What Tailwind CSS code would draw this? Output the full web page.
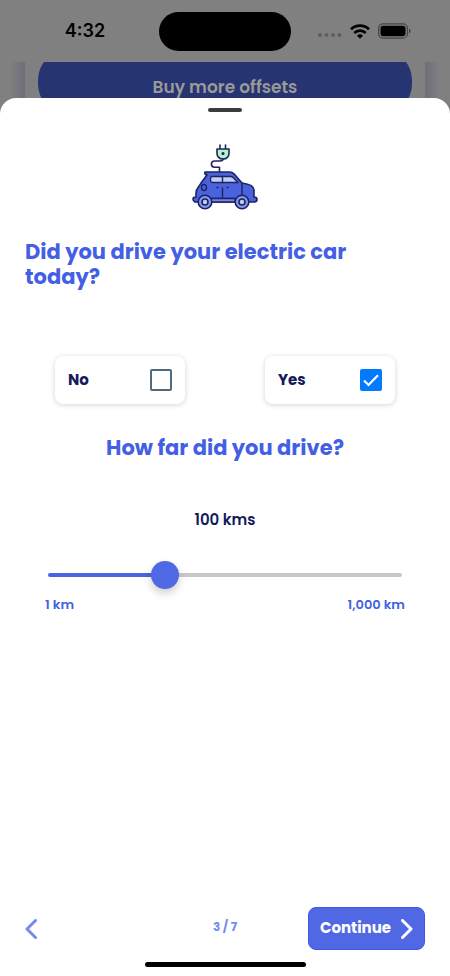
<!DOCTYPE html>
<html lang="en">
<head>
<meta charset="utf-8">
<meta name="viewport" content="width=device-width, initial-scale=1">
<title>Electric car check-in</title>
<script src="https://cdn.jsdelivr.net/npm/@tailwindcss/browser@4"></script>
</head>
<body class="flex min-h-screen flex-col bg-[#808080] font-['Poppins','Inter',sans-serif]">
  <header class="grid h-[62px] shrink-0 grid-cols-3 items-center">
    <div class="pl-5 text-center font-['Inter',sans-serif] text-lg font-semibold text-black">4:32</div>
    <div class="mx-auto h-[39px] w-[132px] rounded-full bg-black"></div>
    <div class="flex items-center justify-end gap-2 pr-[39px]">
      <svg class="mt-2 h-1 w-6" viewBox="0 0 24 4" fill="#5f5f5f" aria-hidden="true"><circle cx="2" cy="2" r="2"/><circle cx="8.500" cy="2" r="2"/><circle cx="15" cy="2" r="2"/><circle cx="21.500" cy="2" r="2"/></svg>
      <svg class="h-[15px] w-5" viewBox="0 0 20 15" fill="none" stroke="#000" stroke-width="2.800" aria-hidden="true"><path d="M1 5.200a12.900 12.900 0 0 1 18 0"/><path d="M4.300 8.900a8.200 8.200 0 0 1 11.400 0"/><path d="M10 14.800 7 11.700a4.300 4.300 0 0 1 6 0Z" fill="#000" stroke="none"/></svg>
      <svg class="h-4 w-[33px]" viewBox="0 0 33 16" aria-hidden="true"><rect x=".6" y=".8" width="28.800" height="14.400" rx="4.500" fill="none" stroke="#444" stroke-width="1.200"/><rect x="2.500" y="2.700" width="25" height="10.600" rx="2.800"/><path d="M31 5.500c2 .8 2 4.200 0 5Z" fill="#444"/></svg>
    </div>
  </header>

  <div class="flex h-9 shrink-0 overflow-hidden">
    <div class="w-[25px] bg-linear-to-r from-[#808080] from-40% to-[#6d6e7a]"></div>
    <div class="flex-1 overflow-hidden px-[13px]">
      <button type="button" class="-mt-3 h-16 w-full rounded-[30px] bg-[#273472] pt-3 text-[17px] font-semibold text-[#999]">Buy more offsets</button>
    </div>
    <div class="w-[25px] bg-linear-to-l from-[#808080] from-40% to-[#6d6e7a]"></div>
  </div>

  <main class="flex flex-1 flex-col rounded-t-2xl bg-white">
    <div class="mx-auto mt-[10px] h-1 w-[34px] rounded-full bg-[#3a3c3e]"></div>

    <svg class="mx-auto mt-8 h-[66px] w-[66px]" viewBox="0 0 66 66" fill="none" stroke="#1c2561" stroke-width="1.600" stroke-linecap="round" stroke-linejoin="round" role="img" aria-label="Electric car">
      <path d="M28 1v4M33.500 1v4"/>
      <path d="M25 5h12v4.500a5.500 5.500 0 0 1-5.500 5.500h-1a5.500 5.500 0 0 1-5.500-5.500Z" fill="#b5f2c4"/>
      <circle cx="31" cy="9.500" r=".8" fill="#1c2561"/>
      <path d="M31 15c0 1.800-1 2-3 2h-5.500a3 3 0 0 0 0 6.200h5v4.800"/>
      <path d="M13 28h25q2 0 4 1.800L50 39c7 1 12 3 12 7v7q3 0 3 2.500T62 58H3q-2-1-2-3t3-2v-4c0-5 3-6 5-10l6-8q-3-1-2-3Z" fill="#4a62dc"/>
      <path d="M19 32.500h19.500q1.500 0 2.500 1l5 5H21q-2.500 0-2.500-2.500Z" fill="#c0cdf8" stroke-width="1.300"/>
      <path d="M30.500 32.500v6M50 39v13M30.500 44v10M25 43.500h1M35 43.500h1M19 54.500h24" stroke-width="1.400"/>
      <ellipse cx="12" cy="43.500" rx="2.500" ry="3" stroke-width="1.400"/>
      <path d="M19 54.500h24V58H19Z" fill="#7187ed" stroke-width="1.400"/>
      <circle cx="13" cy="58" r="6.800" fill="#8498f0"/><circle cx="13" cy="58" r="3" fill="#c0cdf8"/>
      <circle cx="50" cy="58" r="6.800" fill="#8498f0"/><circle cx="50" cy="58" r="3" fill="#c0cdf8"/>
    </svg>

    <h1 class="mt-[29px] px-[25px] text-[21px] leading-[25px] font-bold text-[#445fe3]">Did you drive your electric car today?</h1>

    <div class="mt-[67px] flex justify-between px-[55px]">
      <label class="flex h-12 w-[130px] items-center justify-between rounded-lg bg-white px-[13px] text-[15px] font-bold text-[#141b5c] shadow-[0_1px_5px_rgba(30,35,90,0.2)]">
        No
        <input type="checkbox" class="h-[22px] w-[22px] appearance-none rounded-xs border-2 border-[#526a7d]">
      </label>
      <label class="flex h-12 w-[130px] items-center justify-between rounded-lg bg-white px-[13px] text-[15px] font-bold text-[#141b5c] shadow-[0_1px_5px_rgba(30,35,90,0.2)]">
        Yes
        <span class="grid">
          <input type="checkbox" checked class="col-start-1 row-start-1 h-[22px] w-[22px] appearance-none rounded-xs border-2 border-[#526a7d] checked:border-[#007aff] checked:bg-[#007aff]">
          <svg class="pointer-events-none col-start-1 row-start-1 h-[22px] w-[22px]" viewBox="0 0 22 22" fill="none" stroke="#fff" stroke-width="2.200" aria-hidden="true"><path d="m4 11.500 4.500 4.500L18 6.300"/></svg>
        </span>
      </label>
    </div>

    <h2 class="mt-7 text-center text-[21px] leading-8 font-bold text-[#445fe3]"><label for="distance">How far did you drive?</label></h2>
    <output for="distance" class="mt-11 text-center text-[15px] leading-6 font-semibold text-[#141b5c]">100 kms</output>

    <div class="mt-[29px] px-12">
      <input id="distance" type="range" min="0" max="1000" value="316" aria-valuetext="100 kms" class="block h-7 w-full appearance-none bg-transparent [&::-webkit-slider-runnable-track]:h-1 [&::-webkit-slider-runnable-track]:rounded-full [&::-webkit-slider-runnable-track]:bg-linear-to-r [&::-webkit-slider-runnable-track]:from-[#4a63e0] [&::-webkit-slider-runnable-track]:from-33% [&::-webkit-slider-runnable-track]:to-[#c8c8c8] [&::-webkit-slider-runnable-track]:to-33% [&::-webkit-slider-thumb]:-mt-3 [&::-webkit-slider-thumb]:h-7 [&::-webkit-slider-thumb]:w-7 [&::-webkit-slider-thumb]:appearance-none [&::-webkit-slider-thumb]:rounded-full [&::-webkit-slider-thumb]:bg-[#5068e4] [&::-webkit-slider-thumb]:shadow-[0_4px_8px_rgba(0,0,0,0.2)]">
    </div>
    <div class="mt-1 flex justify-between px-[45px] text-[13px] leading-6 font-semibold text-[#445fe3]">
      <span>1 km</span>
      <span>1,000 km</span>
    </div>

    <footer class="mt-auto">
      <div class="grid grid-cols-3 items-center px-[25px]">
        <button type="button" aria-label="Back" class="justify-self-start">
          <svg class="h-5 w-3" viewBox="0 0 12 20" fill="none" stroke="#768bee" stroke-width="3" stroke-linecap="round" stroke-linejoin="round" aria-hidden="true"><path d="M10.500 1.500 2 10l8.500 8.500"/></svg>
        </button>
        <span class="pb-1 text-center text-xs font-bold text-[#768bee]">3 / 7</span>
        <button type="button" class="flex h-[43px] w-[117px] items-center justify-between justify-self-end rounded-lg border border-[#3f58e0] bg-[#5068e4] px-[11px] text-[15px] font-bold text-white">
          Continue
          <svg class="h-5 w-3" viewBox="0 0 12 20" fill="none" stroke="#fff" stroke-width="3" stroke-linecap="round" stroke-linejoin="round" aria-hidden="true"><path d="M1.500 1.500 10 10l-8.500 8.500"/></svg>
        </button>
      </div>
      <div class="mx-auto mt-3 mb-[9px] h-[5px] w-[161px] rounded-full bg-black"></div>
    </footer>
  </main>
</body>
</html>
